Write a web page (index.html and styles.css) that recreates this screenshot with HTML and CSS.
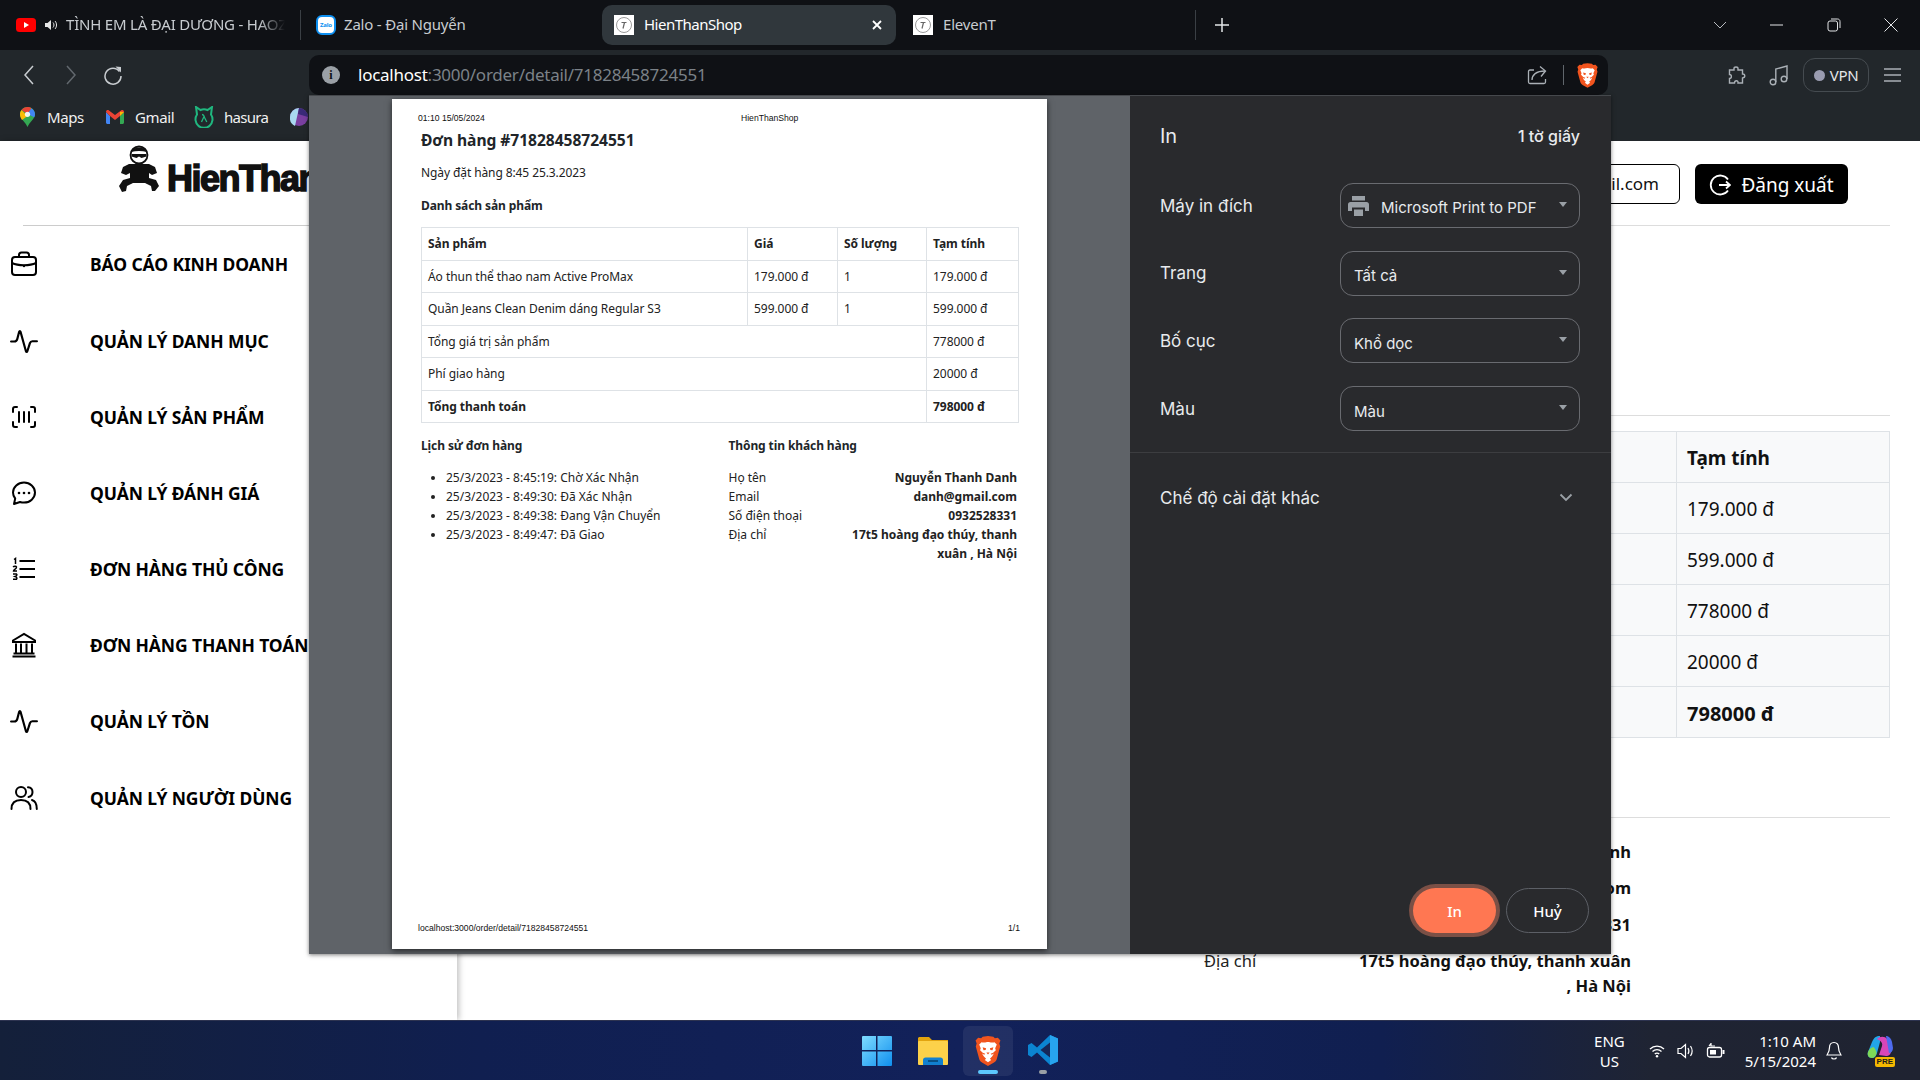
FILE: index.html
```html
<!DOCTYPE html>
<html lang="vi">
<head>
<meta charset="utf-8">
<title>HienThanShop</title>
<link rel="stylesheet" href="styles.css">
</head>
<body>
<svg class="defs" width="0" height="0" aria-hidden="true">
  <symbol id="brave" viewBox="0 0 24 28">
    <path fill="#f1541e" d="M12 0 7 .6 5.600 2 2.800 1.600.4 4.200 1.400 7 .6 9.800l3.200 11.600c.5 1.600 1.400 2.600 3 3.600L12 28l5.200-3c1.600-1 2.500-2 3-3.600L23.400 9.800 22.600 7l1-2.800-2.400-2.600-2.800.4L17 .6z"/>
    <path fill="#fff" d="M12 5.500c-1.300 0-2.300.6-3.500.6-1.200 0-2.500-.3-2.500-.3L3.800 8l1.400 3.500-.6 1.700 2.500 2.500 2.300.9-.9 1-2.100-1.200L8 19l2.200 2.200-1.200 1.200 3 2.100 3-2.100-1.200-1.200L16 19l1.500-2.600-2.100 1.200-.9-1 2.300-.9 2.500-2.500-.6-1.700L20.200 8 18 5.800s-1.300.3-2.500.3c-1.200 0-2.200-.6-3.500-.6z"/>
    <path fill="#f1541e" d="M7 10.500l3.200.9-.4 1.600-2 .4zM17 10.500l-3.200.9.4 1.600 2 .4zM10.500 15.500h3L12 17.200z"/>
  </symbol>
  <symbol id="favicon" viewBox="0 0 20 20">
    <rect width="20" height="20" fill="#fff"/>
    <circle cx="10" cy="10" r="7.500" fill="none" stroke="#9a9a9a"/>
    <path d="M7.500 7.500h5M10.500 7.500 9 13.500" stroke="#666" stroke-width="1.200" fill="none"/>
  </symbol>
  <symbol id="pulse" viewBox="0 0 26 26">
    <path d="M1 13.500h3c1.600 0 2.300-.7 2.800-2.500L8.500 4.500c.3-1 1-1 1.300 0l5 18c.3 1 1 1 1.300 0l2.400-7.500c.4-1.200 1-1.800 2.300-1.800H25" fill="none" stroke="currentColor" stroke-width="2" stroke-linecap="round"/>
  </symbol>
</svg>

<header class="tabbar">
  <div class="tab tab-media">
    <svg class="fav-yt" width="20" height="14" viewBox="0 0 20 14"><rect width="20" height="14" rx="3.500" fill="#f00"/><path d="M8 4l5 3-5 3z" fill="#fff"/></svg>
    <svg class="speaker" width="12" height="12" viewBox="0 0 12 12"><path d="M0 4h2.500L6 1v10L2.500 8H0z" fill="#e6e6e6"/><path d="M8 3.500c1.300 1.500 1.300 3.500 0 5M10 2c2 2.200 2 5.800 0 8" fill="none" stroke="#e6e6e6"/></svg>
    <span class="tab-title tab-fade">TÌNH EM LÀ ĐẠI DƯƠNG - HAOZ</span>
  </div>
  <div class="tab-sep"></div>
  <div class="tab tab-plain">
    <span class="zalo">Zalo</span>
    <span class="tab-title">Zalo - Đại Nguyễn</span>
  </div>
  <div class="tab tab-active">
    <svg class="fav" width="20" height="20"><use href="#favicon"/></svg>
    <span class="tab-title">HienThanShop</span>
    <svg class="tab-close" width="10" height="10" viewBox="0 0 10 10"><path d="M1 1l8 8M9 1 1 9" stroke="#fff" stroke-width="1.800"/></svg>
  </div>
  <div class="tab tab-last">
    <svg class="fav" width="20" height="20"><use href="#favicon"/></svg>
    <span class="tab-title">ElevenT</span>
  </div>
  <div class="tab-sep"></div>
  <svg class="newtab" width="16" height="16" viewBox="0 0 16 16"><path d="M8 1v14M1 8h14" stroke="#e4e6e8" stroke-width="1.500"/></svg>
  <div class="winctl">
    <svg width="14" height="14" viewBox="0 0 14 14"><path d="M1 4l6 6 6-6" fill="none" stroke="#b8bcc0"/></svg>
    <svg width="14" height="14" viewBox="0 0 14 14"><path d="M0 7h13" stroke="#e4e6e8"/></svg>
    <svg width="14" height="14" viewBox="0 0 14 14"><rect x="1" y="3" width="9.500" height="10" rx="2" fill="none" stroke="#e4e6e8"/><path d="M4 1h6.500C12 1 13 2 13 3.500V10" fill="none" stroke="#e4e6e8"/></svg>
    <svg width="14" height="14" viewBox="0 0 14 14"><path d="M.5.500l13 13M13.500.500l-13 13" stroke="#e4e6e8"/></svg>
  </div>
</header>

<div class="toolbar">
  <nav class="navbtns">
    <span class="navbtn"><svg width="12" height="20" viewBox="0 0 12 20"><path d="M10 1 2 10l8 9" fill="none" stroke="#c8ccd0" stroke-width="1.500"/></svg></span>
    <span class="navbtn"><svg width="12" height="20" viewBox="0 0 12 20"><path d="M2 1l8 9-8 9" fill="none" stroke="#62686e" stroke-width="1.500"/></svg></span>
    <span class="navbtn"><svg width="20" height="20" viewBox="0 0 20 20"><path d="M16.500 6.500A8 8 0 1 0 18 11" fill="none" stroke="#c8ccd0" stroke-width="1.500"/><path d="M12.500 1.500l5.500.5v5.500z" fill="#c8ccd0"/></svg></span>
  </nav>
  <div class="addr">
    <span class="addr-info">i</span>
    <span class="addr-url"><span class="addr-host">localhost</span>:3000/order/detail/71828458724551</span>
    <svg class="addr-share" width="20" height="20" viewBox="0 0 20 20"><path d="M7 5H3C2 5 1.500 5.500 1.500 6.500V17C1.500 18 2 18.500 3 18.500H17C18 18.500 18.500 18 18.500 17V14" fill="none" stroke="#aab0b6" stroke-width="1.300"/><path d="M5 15c0-5 4-9 13-9" fill="none" stroke="#aab0b6" stroke-width="1.300"/><path d="M13 1.500l5.500 4.500-4.500 5.500" fill="none" stroke="#aab0b6" stroke-width="1.300"/></svg>
    <span class="addr-sep"></span>
    <svg class="addr-brave" width="21" height="25"><use href="#brave"/></svg>
  </div>
  <div class="tools">
    <svg class="tool-ext" width="20" height="20" viewBox="0 0 20 20"><path d="M7 3.500C7 1.500 11 1.500 11 3.500V5h4.500v4c2.500-.5 3.500 3.500 0 4v5H11c.5-3-3.500-3-3.500 0H2.500v-4.500c2.500 0 2.500-4 0-4V5H7z" fill="none" stroke="#aab0b6" stroke-width="1.400"/></svg>
    <svg class="tool-music" width="20" height="22" viewBox="0 0 20 22"><circle cx="4" cy="18" r="2.800" fill="none" stroke="#aab0b6" stroke-width="1.400"/><circle cx="15" cy="15" r="2.800" fill="none" stroke="#aab0b6" stroke-width="1.400"/><path d="M6.800 18V5L18 2v13" fill="none" stroke="#aab0b6" stroke-width="1.400"/></svg>
    <span class="vpn"><i class="vpn-dot"></i>VPN</span>
    <svg class="tool-menu" width="17" height="14" viewBox="0 0 17 14"><path d="M0 1h17M0 7h17M0 13h17" stroke="#aab0b6" stroke-width="1.400"/></svg>
  </div>
  <div class="bookmarks">
    <span class="bm bm-maps">
      <svg width="15" height="20" viewBox="0 0 15 20"><path d="M7.500 0C3.300 0 0 3.200 0 7.300 0 12 5.500 15 7.500 20c2-5 7.500-8 7.500-12.700C15 3.200 11.700 0 7.500 0z" fill="#34a853"/><path d="M1.500 3 7.500 9 2 13C.5 11 0 9 0 7.300 0 5.500.5 4.300 1.500 3z" fill="#fbbc04"/><path d="M1.500 3C3 1 5 0 7.500 0c1.500 0 3 .5 4 1.200L7.500 7z" fill="#ea4335"/><path d="M11.500 1.200C13.500 2.500 15 4.800 15 7.300c0 1-.2 2-.8 3L7.500 7z" fill="#4285f4"/><circle cx="7.500" cy="7.300" r="2.600" fill="#fff" opacity=".9"/></svg>Maps</span>
    <span class="bm bm-gmail">
      <svg width="18" height="14" viewBox="0 0 18 14"><path d="M0 2v10.500C0 13.300.7 14 1.500 14H4V6z" fill="#4285f4"/><path d="M18 2v10.500c0 .8-.7 1.500-1.500 1.500H14V6z" fill="#34a853"/><path d="M0 2c0-2 2-2.500 3-1.500L9 5l6-4.500C16 -.5 18 0 18 2l-4 4-5 4-5-4z" fill="#ea4335"/><path d="M14 1.700 18 2v0l-4 4z" fill="#fbbc04"/></svg>Gmail</span>
    <span class="bm bm-hasura">
      <svg width="20" height="22" viewBox="0 0 20 22"><path d="M3 8.500 2 1l4.500 3a8 8 0 0 1 7 0L18 1l-1 7.500a8.500 8.500 0 1 1-14 0z" fill="none" stroke="#20b77f" stroke-width="2"/><path d="M7.500 16 10 10.500 12.800 16M8 8.500c1.500 0 2 1 2.500 2.500" fill="none" stroke="#20b77f" stroke-width="1.300"/></svg>hasura</span>
    <svg class="bm-orb" width="18" height="18" viewBox="0 0 18 18"><circle cx="9" cy="9" r="9" fill="#7a3fa0"/><path d="M0 9a9 9 0 0 1 9-9L5 18A9 9 0 0 1 0 9z" fill="#a9d8f0"/><path d="M9 0a9 9 0 0 1 9 9L8 6z" fill="#3a2a78"/></svg>
  </div>
</div>

<main class="page">
  <aside class="sidebar">
    <div class="logo">
      <svg class="logo-mark" width="40" height="48" viewBox="0 0 40 48"><path fill="#111" d="M10 19H30L36 22 38 28 33 30 30 28V33L37 35 40 41 36 46H33L32 41 26 38H14L8 41 7 46 3 47 0 41 4 35 11 33V28L7 30 2 28 4 22z"/><circle cx="20" cy="10" r="8.500" fill="#fff" stroke="#111" stroke-width="1.800"/><path fill="#111" d="M12 7c1-6 15-6 16 0-5-1.500-11-1.500-16 0zM12.500 9h15v2.500l-5 1.500-2.500-1.500L17.500 13l-5-1.500z"/></svg>
      <span class="logo-text">HienThanShop</span>
    </div>
    <ul class="menu">
      <li class="menu-item">
        <svg class="menu-icon" width="28" height="28" viewBox="0 0 28 28"><g fill="none" stroke="currentColor" stroke-width="2"><rect x="2" y="7" width="24" height="18" rx="3"/><path d="M9 7V5c0-1.500 1-2.500 2.500-2.500h5C18 2.500 19 3.500 19 5v2M2 13c6 3 18 3 24 0"/></g><circle cx="14" cy="16" r="1.200" fill="currentColor"/></svg>
        <span>BÁO CÁO KINH DOANH</span></li>
      <li class="menu-item"><svg class="menu-icon" width="28" height="28"><use href="#pulse"/></svg><span>QUẢN LÝ DANH MỤC</span></li>
      <li class="menu-item">
        <svg class="menu-icon" width="28" height="28" viewBox="0 0 28 28"><path d="M7 4H5C3.500 4 3 4.500 3 6v3M3 19v3c0 1.500.5 2 2 2h2M21 4h2c1.500 0 2 .5 2 2v3M25 19v3c0 1.500-.5 2-2 2h-2M9 9v10M14 9v10M19 9v10" fill="none" stroke="currentColor" stroke-width="2" stroke-linecap="round"/></svg>
        <span>QUẢN LÝ SẢN PHẨM</span></li>
      <li class="menu-item">
        <svg class="menu-icon" width="28" height="28" viewBox="0 0 28 28"><path d="M14 3.500c-6 0-11 4.500-11 10 0 2.200.8 4.300 2.200 6L4 25l6-2c1.300.4 2.600.6 4 .6 6 0 11-4.500 11-10S20 3.500 14 3.500z" fill="none" stroke="currentColor" stroke-width="2" stroke-linejoin="round"/><g fill="currentColor"><circle cx="9" cy="14" r="1.300"/><circle cx="14" cy="14" r="1.300"/><circle cx="19" cy="14" r="1.300"/></g></svg>
        <span>QUẢN LÝ ĐÁNH GIÁ</span></li>
      <li class="menu-item">
        <svg class="menu-icon" width="28" height="28" viewBox="0 0 28 28"><path d="M9.500 6H25M9.500 14H25M9.500 22H25" stroke="currentColor" stroke-width="2"/><path d="M4 4.500l1.500-1V9M3 16h4l-3.500 0c0-2 3.500-2 3-4-.3-1-2.700-1-3.300.2M3 19h3.500c1 .8 0 2-1.500 2.500 1.500.5 2.500 1.700 1.500 2.800H3" fill="none" stroke="currentColor" stroke-width="1.500"/></svg>
        <span>ĐƠN HÀNG THỦ CÔNG</span></li>
      <li class="menu-item">
        <svg class="menu-icon" width="28" height="28" viewBox="0 0 28 28"><path d="M3 9.500 14 3l11 6.500v1.500H3zM2.500 25.500h23" fill="none" stroke="currentColor" stroke-width="2"/><path d="M6 12.500V22M11 12.500V22M16.500 12.500V22M22 12.500V22M3.500 22.500h21" stroke="currentColor" stroke-width="2"/></svg>
        <span>ĐƠN HÀNG THANH TOÁN</span></li>
      <li class="menu-item"><svg class="menu-icon" width="28" height="28"><use href="#pulse"/></svg><span>QUẢN LÝ TỒN</span></li>
      <li class="menu-item">
        <svg class="menu-icon" width="28" height="28" viewBox="0 0 28 28"><g fill="none" stroke="currentColor" stroke-width="2" stroke-linecap="round"><circle cx="11" cy="8" r="5"/><path d="M1.500 25c0-6 3-9 9.500-9s9.500 3 9.500 9M18 3.200c3 .2 4.500 2.200 4.500 4.800s-1.500 4.500-4 5M22 16c3.500 1 4.800 4 4.800 9"/></g></svg>
        <span>QUẢN LÝ NGƯỜI DÙNG</span></li>
    </ul>
  </aside>
  <section class="content">
    <div class="topbar">
      <span class="email">danh@gmail.com</span>
      <button class="logout">
        <svg width="22" height="22" viewBox="0 0 22 22"><path d="M19 5.500A9.500 9.500 0 1 0 19 16.500" fill="none" stroke="#fff" stroke-width="1.800"/><path d="M10 11h11M17 7.500l4 3.500-4 3.500" fill="none" stroke="#fff" stroke-width="1.800"/></svg>Đăng xuất</button>
    </div>
    <div class="rule"></div>
    <div class="rule rule-before-table"></div>
    <table class="items">
      <tr class="items-head"><th></th><th class="items-last">Tạm tính</th></tr>
      <tr><td></td><td>179.000 đ</td></tr>
      <tr><td></td><td>599.000 đ</td></tr>
      <tr><td></td><td>778000 đ</td></tr>
      <tr><td></td><td>20000 đ</td></tr>
      <tr class="items-total"><td></td><td>798000 đ</td></tr>
    </table>
    <div class="rule rule-after-table"></div>
    <dl class="customer">
      <dt>Họ tên</dt><dd>Nguyễn Thanh Danh</dd>
      <dt>Email</dt><dd>danh@gmail.com</dd>
      <dt>Số điện thoại</dt><dd>0932528331</dd>
      <dt>Địa chỉ</dt><dd class="customer-addr">17t5 hoàng đạo thúy, thanh xuân , Hà Nội</dd>
    </dl>
  </section>
</main>

<footer class="taskbar">
  <div class="task-apps">
    <svg class="app" width="30" height="30" viewBox="0 0 30 30"><defs><linearGradient id="win" x1="0" y1="0" x2="1" y2="1"><stop offset="0" stop-color="#7fdcff"/><stop offset="1" stop-color="#0f8fee"/></linearGradient></defs><path fill="url(#win)" d="M1 0h13v14H0V1a1 1 0 0 1 1-1zM15.500 0H29a1 1 0 0 1 1 1v13H15.500zM0 15.500h14V30H1a1 1 0 0 1-1-1zM15.500 15.500H30V29a1 1 0 0 1-1 1H15.500z"/></svg>
    <svg class="app" width="30" height="28" viewBox="0 0 30 28"><path d="M1 0h10l3 3h16v8H0V1z" fill="#e2a40f"/><rect y="4" width="30" height="24" rx="1" fill="#fcd14a"/><path d="M5 28v-5c0-1.500 1-2.500 2.500-2.500h15c1.500 0 2.500 1 2.500 2.500v5z" fill="#1180d0"/><path d="M10 24h10" stroke="#06426e" stroke-width="1.500"/></svg>
    <span class="app-active"><svg width="26" height="30"><use href="#brave"/></svg><i class="app-bar"></i></span>
    <span class="app-code">
      <svg width="30" height="30" viewBox="0 0 30 30"><path d="M22 0 30 3.500v23L22 30 9 17.500 3.500 22 0 20V10l3.500-2L9 12.500z" fill="#0b84d1"/><path d="M22 0l8 3.500v23L22 30z" fill="#27a4ee"/><path d="M22 7.500 12.500 15 22 22.500z" fill="#162758"/></svg>
      <i class="app-dot"></i>
    </span>
  </div>
  <div class="tray">
    <span class="lang">ENG<br>US</span>
    <svg width="16" height="14" viewBox="0 0 16 14"><path d="M1 5a10 10 0 0 1 14 0M3.500 7.500a6.500 6.500 0 0 1 9 0M5.800 10a3 3 0 0 1 4.400 0" fill="none" stroke="#fff" stroke-width="1.300"/><circle cx="8" cy="12.300" r="1.200" fill="#fff"/></svg>
    <svg width="18" height="18" viewBox="0 0 18 18"><path d="M1 6.500h3L8.500 2.500v13L4 11.500H1z" fill="none" stroke="#fff" stroke-width="1.200"/><path d="M11 6c1.200 2 1.200 4 0 6M13.500 4c2 3 2 7 0 10" fill="none" stroke="#fff" stroke-width="1.200"/></svg>
    <svg class="tray-bat" width="20" height="16" viewBox="0 0 20 16"><rect x="1.500" y="4.500" width="14" height="9.500" rx="2" fill="none" stroke="#fff" stroke-width="1.300"/><rect x="4" y="7" width="6" height="4.500" fill="#fff"/><path d="M17.500 7v4" stroke="#fff" stroke-width="2"/><path d="M3 3 5 .5V3H9" fill="none" stroke="#fff" stroke-width="1.200"/></svg>
    <span class="clock">1:10 AM<br>5/15/2024</span>
    <svg width="16" height="20" viewBox="0 0 16 20"><path d="M8 1.500c-3 0-4.500 2.200-4.500 5 0 4-1.500 6-2.500 7.500h14c-1-1.500-2.500-3.500-2.500-7.500 0-2.800-1.500-5-4.500-5zM5.500 16.500c.5 2 4.500 2 5 0" fill="none" stroke="#fff" stroke-width="1.200"/></svg>
    <span class="copilot">
      <svg width="28" height="26" viewBox="0 0 28 26"><path d="M14 0c-4 0-6 1.500-8 6L2 16c-1 3 .5 6 4 6 2.500 0 4-2 5-5L14 6z" fill="#22a6e8"/><path d="M2 16c-1 3 .5 6 4 6 2 0 3.500-1.500 4.500-4 0-3-1-5-3-7-2 .5-4.500 2-5.500 5z" fill="#7ed957"/><path d="M11 3c3-3 8-3 10 0 2 3 4 8 4 12 0 3-2 5-5 5l-7-1 3-9c1-3-1-5-5-7z" fill="#d946b8"/><path d="M20 0c3 0 5 2.500 6 6l1 6c0 3-2 5-4 5z" fill="#4f6cf0"/></svg>
      <b class="pre">PRE</b>
    </span>
  </div>
</footer>

<section class="print" aria-label="In">
  <div class="preview">
    <article class="paper">
      <div class="paper-head"><span class="paper-date">01:10 15/05/2024</span><span class="paper-site">HienThanShop</span></div>
      <div class="paper-body">
        <h1 class="order-title">Đơn hàng #71828458724551</h1>
        <p class="order-date">Ngày đặt hàng 8:45 25.3.2023</p>
        <h2 class="order-sub">Danh sách sản phẩm</h2>
        <table class="receipt">
          <colgroup><col class="c1"><col class="c2"><col class="c3"><col class="c4"></colgroup>
          <tr class="strong"><td>Sản phẩm</td><td>Giá</td><td>Số lượng</td><td>Tạm tính</td></tr>
          <tr><td>Áo thun thể thao nam Active ProMax</td><td>179.000 đ</td><td>1</td><td>179.000 đ</td></tr>
          <tr><td>Quần Jeans Clean Denim dáng Regular S3</td><td>599.000 đ</td><td>1</td><td>599.000 đ</td></tr>
          <tr><td colspan="3">Tổng giá trị sản phẩm</td><td>778000 đ</td></tr>
          <tr><td colspan="3">Phí giao hàng</td><td>20000 đ</td></tr>
          <tr class="strong"><td colspan="3">Tổng thanh toán</td><td>798000 đ</td></tr>
        </table>
        <div class="paper-cols">
          <div class="history">
            <h2 class="order-sub">Lịch sử đơn hàng</h2>
            <ul class="history-list">
              <li>25/3/2023 - 8:45:19: Chờ Xác Nhận</li>
              <li>25/3/2023 - 8:49:30: Đã Xác Nhận</li>
              <li>25/3/2023 - 8:49:38: Đang Vận Chuyển</li>
              <li>25/3/2023 - 8:49:47: Đã Giao</li>
            </ul>
          </div>
          <div class="buyer">
            <h2 class="order-sub">Thông tin khách hàng</h2>
            <dl class="buyer-list">
              <dt>Họ tên</dt><dd>Nguyễn Thanh Danh</dd>
              <dt>Email</dt><dd>danh@gmail.com</dd>
              <dt>Số điện thoại</dt><dd>0932528331</dd>
              <dt>Địa chỉ</dt><dd>17t5 hoàng đạo thúy, thanh xuân , Hà Nội</dd>
            </dl>
          </div>
        </div>
      </div>
      <div class="paper-foot"><span>localhost:3000/order/detail/71828458724551</span><span>1/1</span></div>
    </article>
  </div>
  <aside class="panel">
    <div class="panel-head"><h2 class="panel-title">In</h2><span class="panel-count">1 tờ giấy</span></div>
    <div class="fields">
      <div class="field"><span class="field-label">Máy in đích</span>
        <div class="select">
          <svg class="printer" width="21" height="20" viewBox="0 0 21 20"><path fill="#9aa0a6" d="M4 0h13v4.500H4zM2.500 6h16C20 6 21 7 21 8.500V15h-4v-3.500H4V15H0V8.500C0 7 1 6 2.500 6zM6 13.500h9V20H6z"/></svg>
          <span class="select-text select-printer">Microsoft Print to PDF</span><i class="caret"></i></div></div>
      <div class="field"><span class="field-label">Trang</span><div class="select"><span class="select-text">Tất cả</span><i class="caret"></i></div></div>
      <div class="field"><span class="field-label">Bố cục</span><div class="select"><span class="select-text">Khổ dọc</span><i class="caret"></i></div></div>
      <div class="field"><span class="field-label">Màu</span><div class="select"><span class="select-text">Màu</span><i class="caret"></i></div></div>
    </div>
    <div class="more"><span>Chế độ cài đặt khác</span>
      <svg width="14" height="9" viewBox="0 0 14 9"><path d="M1.500 1.500 7 7l5.500-5.500" fill="none" stroke="#9aa0a6" stroke-width="1.800"/></svg></div>
    <div class="actions"><button class="btn btn-print">In</button><button class="btn btn-cancel">Huỷ</button></div>
  </aside>
</section>
</body>
</html>
```

FILE: styles.css
```css
* { box-sizing: border-box; }
html, body { margin: 0; height: 100%; }
body {
  width: 1920px; height: 1080px; overflow: hidden; position: relative;
  display: flex; flex-direction: column;
  font-family: "Noto Sans", "Open Sans", sans-serif; color: #111; background: #fff;
}
.defs { position: absolute; }
button { font-family: inherit; border: 0; }

/* tab strip */
.tabbar { height: 50px; flex: none; background: #0f1115; display: flex; align-items: center; color: #c8ccd0; font-size: 15px; }
.tab { display: flex; align-items: center; height: 40px; flex: none; }
.tab-media { width: 300px; padding-left: 16px; }
.speaker { margin-left: 9px; }
.tab-title { white-space: nowrap; letter-spacing: -.2px; padding-bottom: 2px; }
.tab-fade { margin-left: 9px; width: 219px; overflow: hidden; -webkit-mask-image: linear-gradient(90deg, #000 88%, transparent); mask-image: linear-gradient(90deg, #000 88%, transparent); }
.tab-sep { width: 1px; height: 30px; background: #3a3f44; flex: none; }
.tab-plain { width: 301px; padding-left: 15px; }
.zalo { width: 20px; height: 20px; border-radius: 6px; background: #fff; border: 2px solid #0d8ff0; color: #0d8ff0; font-size: 6px; font-weight: 700; letter-spacing: -.2px; display: flex; align-items: center; justify-content: center; margin-right: 8px; }
.tab-active { width: 294px; padding: 0 14px 0 12px; background: #30373c; border-radius: 10px; color: #fff; }
.tab-active .tab-title { letter-spacing: -.5px; }
.fav { margin-right: 10px; flex: none; }
.tab-close { margin-left: auto; }
.tab-last { width: 299px; padding-left: 17px; }
.newtab { margin-left: 18px; }
.winctl { margin-left: auto; display: flex; gap: 43px; padding-right: 22px; }

/* toolbar */
.toolbar { height: 91px; flex: none; background: #22272b; display: flex; flex-wrap: wrap; align-content: flex-start; padding-top: 5px; }
.navbtns { width: 309px; display: flex; padding-left: 8px; height: 40px; align-items: center; }
.navbtn { width: 42px; display: flex; justify-content: center; }
.addr { width: 1299px; height: 40px; background: #0f1115; border-radius: 10px; display: flex; align-items: center; padding: 0 10px 0 13px; }
.addr-info { width: 18px; height: 18px; border-radius: 50%; background: #9aa0a6; color: #0f1115; font: 700 12px/18px "Liberation Serif", serif; text-align: center; }
.addr-url { margin-left: 18px; color: #7c8288; font-size: 17px; letter-spacing: -.25px; padding-bottom: 2px; }
.addr-host { color: #fff; }
.addr-share { margin-left: auto; }
.addr-sep { width: 1px; height: 20px; background: #60666c; margin: 0 13px 0 16px; }
.tools { flex: 1; display: flex; align-items: center; height: 40px; }
.tool-ext { margin-left: 119px; }
.tool-music { margin-left: 22px; }
.vpn { margin-left: 14px; width: 66px; height: 34px; border: 1px solid #454b50; border-radius: 12px; display: flex; align-items: center; justify-content: center; gap: 5px; color: #e4e6e8; font-size: 15px; letter-spacing: -.4px; }
.vpn-dot { width: 11px; height: 11px; border-radius: 50%; background: #9a9cb0; }
.tool-menu { margin-left: 15px; }
.bookmarks { width: 100%; height: 46px; display: flex; align-items: center; color: #f0f0f0; font-size: 15px; letter-spacing: -.4px; padding: 0 0 2px 20px; }
.bm { display: flex; align-items: center; }
.bm-maps { gap: 12px; width: 86px; }
.bm-gmail { gap: 11px; width: 88px; }
.bm-hasura { gap: 10px; width: 96px; letter-spacing: -.7px; }

/* page underneath */
.page { flex: 1; display: flex; min-height: 0; }
.sidebar { width: 457px; flex: none; box-shadow: 2px 0 6px rgba(0,0,0,.25); }
.logo { height: 84px; display: flex; padding: 4px 0 0 119px; overflow: hidden; width: 309px; white-space: nowrap; }
.logo-mark { flex: none; margin-right: 8px; }
.logo-text { font: 700 36px/52px "Liberation Sans", sans-serif; letter-spacing: -1.500px; -webkit-text-stroke: 1.500px #111; color: #111; padding-top: 8px; }
.menu { list-style: none; margin: 1px 0 0; padding: 1px 0 0; border-top: 0; position: relative; }
.menu::before { content: ""; display: block; height: 1px; margin: -2px 0 .25px 23px; width: 286px; background: #ccc; }
.menu-item { height: 76.200px; display: flex; align-items: center; padding-left: 10px; font-size: 17.500px; font-weight: 700; color: #000; letter-spacing: -.1px; white-space: nowrap; }
.menu-icon { flex: none; margin-right: 52px; }
.content { flex: 1; padding-right: 30px; min-width: 0; }
.topbar { display: flex; justify-content: flex-end; gap: 15px; padding: 23px 42px 21px 0; height: 84px; }
.email { height: 40px; padding: 0 20px; border: 1px solid #000; border-radius: 6px; font-size: 17px; line-height: 38px; }
.logout { height: 40px; width: 153px; background: #000; color: #fff; border-radius: 6px; font-size: 19px; display: flex; align-items: center; justify-content: center; gap: 10px; padding: 1px 0 0; }
.rule { height: 1px; background: #ddd; }
.rule-before-table { margin: 189px 0 15px; }
.items { width: 100%; border-collapse: collapse; background: #f8f9fa; font-size: 19px; table-layout: fixed; }
.items th, .items td { border: 1px solid #dee2e6; height: 51px; padding: 2px 10px 0; text-align: left; }
.items-last { width: 213px; font-size: 19px; }
.items-total td { font-weight: 700; font-size: 20px; }
.rule-after-table { margin-top: 79px; }
.customer { margin: 21px 259px 0 747px; display: grid; grid-template-columns: auto 1fr; font-size: 16.500px; line-height: 26px; row-gap: 10.300px; }
.customer dt { color: #222; }
.customer dd { margin: 0; text-align: right; font-weight: 700; }
.customer .customer-addr { padding-left: 48px; line-height: 25px; }

/* taskbar */
.taskbar { height: 60px; flex: none; background: linear-gradient(90deg, #14203a 0, #101f50 25%, #12215a 50%, #101f50 72%, #1f2433 86%, #1f2331 100%); border-top: 1px solid #2d3350; display: flex; color: #fff; position: relative; }
.task-apps { margin-left: 862px; display: flex; align-items: center; }
.app { flex: none; margin-right: 26px; }
.app-active { width: 50px; height: 50px; margin-left: -11px; background: rgba(255,255,255,.07); border-radius: 6px; display: flex; flex-direction: column; align-items: center; padding-top: 10px; }
.app-bar { width: 20px; height: 4px; border-radius: 2px; background: #5cc8ff; margin-top: 4px; }
.app-code { margin-left: 15px; display: flex; flex-direction: column; align-items: center; padding-top: 8px; }
.app-dot { width: 8px; height: 4px; border-radius: 2px; background: #9aa0a6; margin-top: 5px; }
.tray { margin-left: auto; display: flex; align-items: center; gap: 12px; padding-right: 26px; font-size: 15px; line-height: 20px; }
.lang { text-align: center; margin-right: 12px; }
.tray-bat { margin-left: -1px; }
.clock { text-align: right; margin-left: 7px; margin-right: -2px; }
.copilot { position: relative; margin-left: 12px; width: 28px; height: 30px; }
.pre { position: absolute; right: -1px; bottom: -1px; background: #f5b800; color: #1b1b1b; font: 700 8px/10px "Liberation Sans", sans-serif; padding: 0 2px; border-radius: 2px; }

/* print overlay */
.print { position: absolute; left: 309px; top: 95px; width: 1302px; height: 859px; display: flex; border-top: 1px solid #45484c; box-shadow: 0 1px 4px rgba(0,0,0,.5); }
.preview { width: 821px; flex: none; background: #5f6368; padding: 3px 83px 5px; }
.paper { height: 100%; background: #fff; display: flex; flex-direction: column; color: #222; box-shadow: 0 2px 6px rgba(0,0,0,.6); }
.paper-head { display: flex; padding: 14px 0 0 26px; font: 8.600px/10px "Liberation Sans", sans-serif; color: #111; }
.paper-date { width: 323px; }
.paper-body { padding: 0 30px 0 29px; flex: 1; font-size: 12px; }
.order-title { margin: 7px 0 0; font-size: 15.600px; line-height: 20px; font-weight: 700; color: #212529; letter-spacing: -.05px; }
.order-date { margin: 14px 0 0; line-height: 18px; letter-spacing: -.1px; }
.order-sub { margin: 0; font-size: 12px; line-height: 18px; font-weight: 700; color: #212529; letter-spacing: -.1px; }
.order-date + .order-sub { margin-top: 15px; }
.receipt { width: 597px; margin-top: 12px; border-collapse: collapse; table-layout: fixed; letter-spacing: -.05px; }
.receipt td { border: 1px solid #dee2e6; height: 32.500px; padding: 0 6px; }
.c1 { width: 326px; } .c2 { width: 90px; } .c3 { width: 89px; } .c4 { width: 92px; }
.strong td { font-weight: 700; }
.paper-cols { display: flex; margin-top: 14px; }
.history { width: 308px; }
.buyer { width: 289px; }
.history-list { list-style: disc; margin: 13px 0 0; padding: 0 0 0 25px; line-height: 19px; }
.buyer-list { margin: 13px 0 0; display: grid; grid-template-columns: auto 1fr; line-height: 19px; }
.buyer-list dd { margin: 0; text-align: right; font-weight: 700; }
.buyer-list dd:last-child { padding-left: 30px; }
.paper-foot { display: flex; justify-content: space-between; padding: 0 27px 16px 26px; font: 8.600px/10px "Liberation Sans", sans-serif; color: #111; }

.panel { flex: 1; background: #292a2d; color: #e8eaed; display: flex; flex-direction: column; padding-bottom: 21px; font-family: Inter, "Noto Sans", sans-serif; }
.panel-head { display: flex; justify-content: space-between; padding: 25px 31px 0 30px; height: 87px; align-items: flex-start; }
.panel-title { margin: 0; font-size: 20px; line-height: 30px; font-weight: 400; }
.panel-count { font-size: 16px; line-height: 30px; font-weight: 500; }
.fields { display: flex; flex-direction: column; gap: 22.700px; padding: 0 31px 0 30px; }
.field { display: flex; align-items: center; justify-content: space-between; height: 45px; }
.field-label { font-size: 17px; }
.select { width: 240px; height: 45px; border: 1px solid #696b70; border-radius: 13px; display: flex; align-items: center; padding: 5px 12px 0 13px; position: relative; font-size: 15px; }
.printer { position: absolute; left: 7px; top: 12px; }
.select-printer { margin-left: 27px; font-size: 15px; padding-bottom: 1px; }
.caret { margin-left: auto; margin-top: -7px; border: 4.500px solid transparent; border-top: 5px solid #9aa0a6; border-bottom: 0; }
.more { margin-top: 21px; border-top: 1px solid #3c3d40; height: 90px; display: flex; align-items: center; justify-content: space-between; padding: 0 38px 0 30px; font-size: 17px; }
.actions { margin-top: auto; display: flex; justify-content: flex-end; gap: 10px; padding-right: 22px; }
.btn { width: 83px; height: 45px; border-radius: 23px; color: #fff; font-size: 15px; font-weight: 500; font-family: "Noto Sans", sans-serif; }
.btn-print { background: #ff7752; box-shadow: 0 0 0 4px #7b5046; }
.btn-cancel { background: transparent; border: 1px solid #5c5f66; }
```
